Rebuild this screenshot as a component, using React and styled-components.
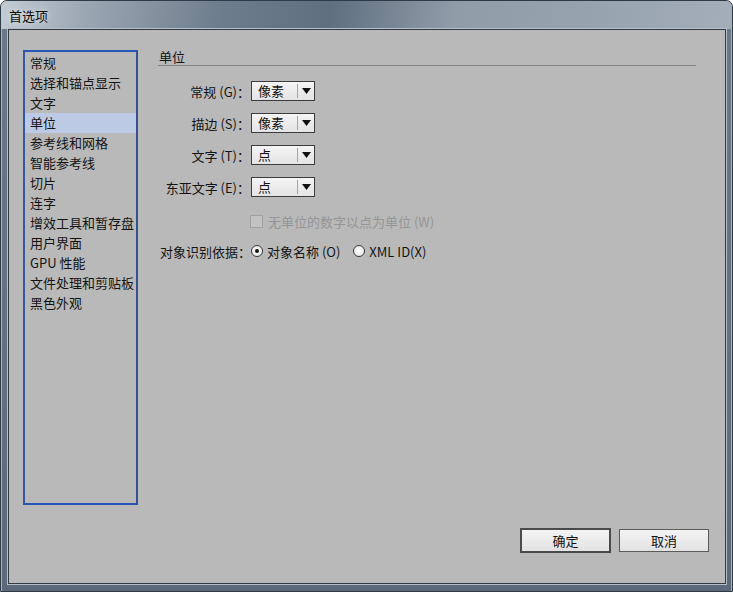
import React, { useState } from 'react';
import styled, { createGlobalStyle } from 'styled-components';

const GlobalStyle = createGlobalStyle`
  html, body {
    margin: 0;
    padding: 0;
    background: #ffffff;
  }
  body {
    font-family: "Noto Sans CJK SC", "Liberation Sans", sans-serif;
    font-size: 13px;
    color: #111;
  }
`;

const categories = [
  '常规',
  '选择和锚点显示',
  '文字',
  '单位',
  '参考线和网格',
  '智能参考线',
  '切片',
  '连字',
  '增效工具和暂存盘',
  '用户界面',
  'GPU 性能',
  '文件处理和剪贴板',
  '黑色外观',
];

const unitRows = [
  { label: '常规 (G)：', value: '像素' },
  { label: '描边 (S)：', value: '像素' },
  { label: '文字 (T)：', value: '点' },
  { label: '东亚文字 (E)：', value: '点' },
];

const App = () => {
  const [selected, setSelected] = useState('单位');
  const [identify, setIdentify] = useState('name');

  return (
    <>
      <GlobalStyle />
      <Window>
        <TitleBar>
          <Title>首选项</Title>
        </TitleBar>
        <Content>
          <Main>
            <CategoryList>
              {categories.map((c) => (
                <CategoryItem key={c} $active={c === selected} onClick={() => setSelected(c)}>
                  {c}
                </CategoryItem>
              ))}
            </CategoryList>
            <Panel>
              <SectionTitle>单位</SectionTitle>
              <UnitGrid>
                {unitRows.map((r) => (
                  <React.Fragment key={r.label}>
                    <FieldLabel>{r.label}</FieldLabel>
                    <Select>
                      <SelectValue>{r.value}</SelectValue>
                      <SelectArrow>
                        <svg width="9" height="6" viewBox="0 0 9 6">
                          <path d="M0 0 H9 L4.5 6 Z" fill="#111" />
                        </svg>
                      </SelectArrow>
                    </Select>
                  </React.Fragment>
                ))}
              </UnitGrid>
              <CheckRow>
                <CheckBox />
                <DisabledText>无单位的数字以点为单位 (W)</DisabledText>
              </CheckRow>
              <RadioRow>
                <RadioLabel>对象识别依据：</RadioLabel>
                <RadioOption onClick={() => setIdentify('name')}>
                  <Radio $checked={identify === 'name'} />
                  <span>对象名称 (O)</span>
                </RadioOption>
                <RadioOption onClick={() => setIdentify('xml')}>
                  <Radio $checked={identify === 'xml'} />
                  <span>XML ID(X)</span>
                </RadioOption>
              </RadioRow>
            </Panel>
          </Main>
          <ButtonRow>
            <Button $primary>确定</Button>
            <Button>取消</Button>
          </ButtonRow>
        </Content>
      </Window>
    </>
  );
};

export default App;

// Styled Components

const Window = styled.div`
  width: 733px;
  height: 592px;
  box-sizing: border-box;
  display: flex;
  flex-direction: column;
  padding: 0 6px 7px 7px;
  border-radius: 7px 7px 0 0;
  border: 1px solid #2e3a46;
  background: linear-gradient(180deg, #6a7a8b 0%, #5b6a7b 100%);
  box-shadow: inset 1px 1px 0 #aab4bf, inset -1px 0 0 #aab4bf;
  overflow: hidden;
`;

const TitleBar = styled.div`
  height: 28px;
  flex: none;
  display: flex;
  align-items: center;
  margin: 0 -6px 0 -7px;
  padding-left: 8px;
  background: linear-gradient(100deg, #c3cbd3 0%, #9aa6b2 12%, #6e7d8d 30%, #5f6f80 45%, #909ca8 62%, #96a2ae 80%, #a3aeb9 100%);
`;

const Title = styled.span`
  font-size: 13px;
  color: #0c0c0c;
  text-shadow: 0 0 6px rgba(255, 255, 255, 0.8);
`;

const Content = styled.div`
  flex: 1;
  display: flex;
  flex-direction: column;
  background: #b9b9b9;
  border: 1px solid #2f3a44;
  box-shadow: 0 0 0 1px #b7c0ca;
  padding: 20px 0 0 14px;
`;

const Main = styled.div`
  display: flex;
  gap: 20px;
`;

const CategoryList = styled.div`
  width: 115px;
  height: 455px;
  box-sizing: border-box;
  border: 2px solid #2a56b8;
  border-right-color: #34538c;
  border-left-color: #3656a0;
  background: #b9b9b9;
  padding-top: 1px;
`;

const CategoryItem = styled.div`
  height: 20px;
  line-height: 20px;
  padding-left: 5px;
  font-size: 13px;
  white-space: nowrap;
  color: #141414;
  background: ${(p) => (p.$active ? '#bccae6' : 'transparent')};
  cursor: default;
`;

const Panel = styled.div`
  width: 538px;
  display: flex;
  flex-direction: column;
`;

const SectionTitle = styled.div`
  font-size: 13px;
  line-height: 16px;
  padding: 0 0 0 1px;
  border-bottom: 1px solid #858585;
  color: #141414;
  margin-top: -1px;
`;

const UnitGrid = styled.div`
  display: grid;
  grid-template-columns: 92px 64px;
  grid-auto-rows: 20px;
  row-gap: 12px;
  column-gap: 1px;
  margin-top: 15px;
  align-items: center;
`;

const FieldLabel = styled.div`
  text-align: right;
  font-size: 13px;
  white-space: nowrap;
  color: #141414;
`;

const Select = styled.div`
  height: 20px;
  box-sizing: border-box;
  border: 1px solid #3c3c3c;
  background: linear-gradient(180deg, #f4f4f4 0%, #e4e4e4 100%);
  display: flex;
  align-items: center;
`;

const SelectValue = styled.div`
  flex: 1;
  padding-left: 6px;
  font-size: 13px;
  color: #111;
  line-height: 18px;
`;

const SelectArrow = styled.div`
  width: 16px;
  height: 14px;
  border-left: 1px solid #a8a8a8;
  display: flex;
  align-items: center;
  justify-content: center;
`;

const CheckRow = styled.div`
  display: flex;
  align-items: center;
  gap: 5px;
  margin: 16px 0 0 92px;
  height: 16px;
`;

const CheckBox = styled.div`
  width: 11px;
  height: 11px;
  border: 1px solid #a0a0a0;
  background: #c2c2c2;
`;

const DisabledText = styled.span`
  font-size: 13px;
  color: #959595;
`;

const RadioRow = styled.div`
  display: flex;
  align-items: center;
  margin: 14px 0 0 2px;
  height: 16px;
  font-size: 13px;
  color: #141414;
`;

const RadioLabel = styled.span`
  width: 91px;
  white-space: nowrap;
`;

const RadioOption = styled.label`
  display: flex;
  align-items: center;
  gap: 4px;
  margin-right: 13px;
  cursor: default;
`;

const Radio = styled.span`
  width: 10px;
  height: 10px;
  border-radius: 50%;
  border: 1px solid #3a3a3a;
  background: radial-gradient(circle, #ffffff 0%, #e2e2e2 100%);
  display: flex;
  align-items: center;
  justify-content: center;

  &::after {
    content: '';
    width: 4px;
    height: 4px;
    border-radius: 50%;
    background: ${(p) => (p.$checked ? '#111' : 'transparent')};
  }
`;

const ButtonRow = styled.div`
  display: flex;
  justify-content: flex-end;
  gap: 8px;
  margin-top: 23px;
  padding-right: 16px;
`;

const Button = styled.button`
  width: ${(p) => (p.$primary ? '91px' : '90px')};
  height: ${(p) => (p.$primary ? '25px' : '23px')};
  margin-top: ${(p) => (p.$primary ? '0' : '1px')};
  box-sizing: border-box;
  border: ${(p) => (p.$primary ? '2px solid #4a4a4a' : '1px solid #5a5a5a')};
  background: linear-gradient(180deg, #f4f4f4 0%, #e2e2e2 100%);
  font-family: "Noto Sans CJK SC", "Liberation Sans", sans-serif;
  font-size: 13px;
  color: #111;
  padding: 0;
  cursor: default;
`;
